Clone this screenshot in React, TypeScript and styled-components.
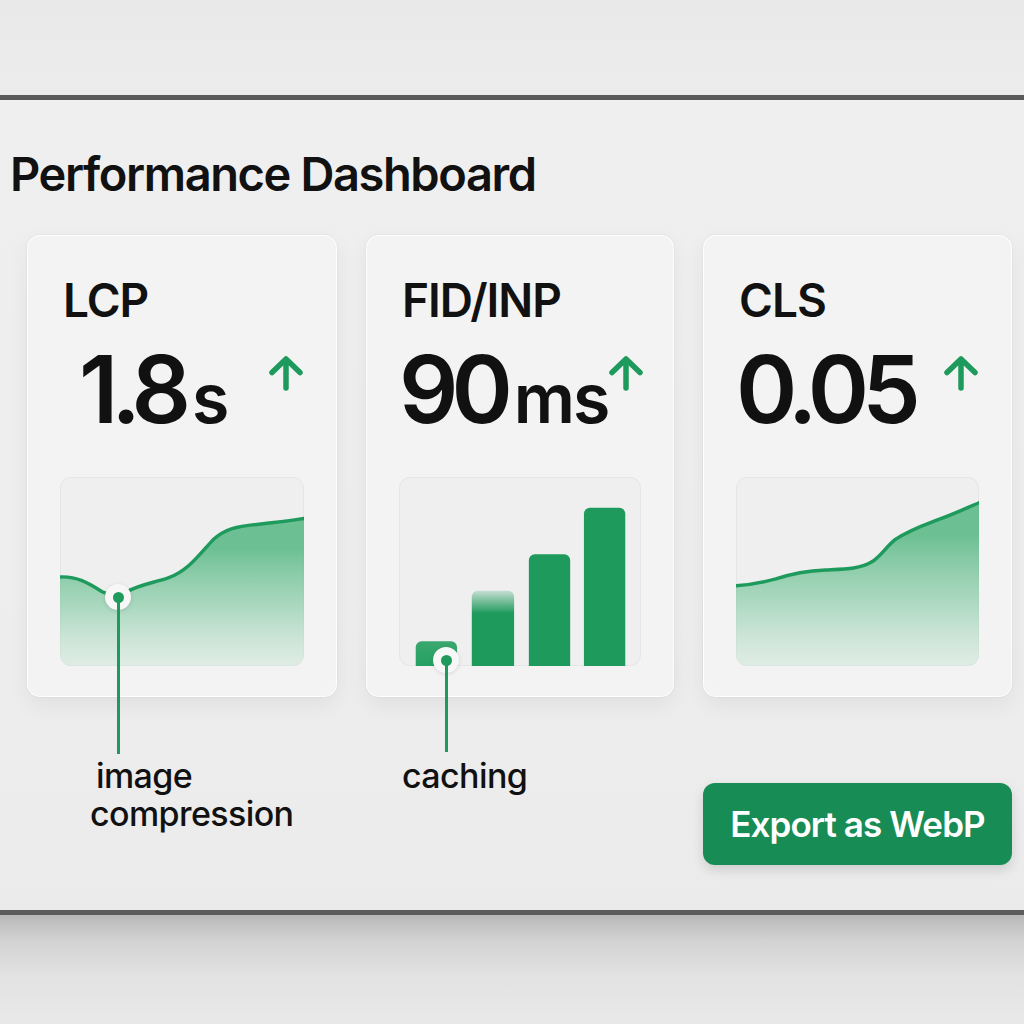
import React from 'react';
import styled, {createGlobalStyle} from 'styled-components';

const GREEN = '#1e9a5c';

const Global = createGlobalStyle`
  html, body {
    margin: 0;
    padding: 0;
    background: #ebebeb;
    font-family: Inter, "Noto Sans", "Liberation Sans", sans-serif;
    color: #111;
  }
`;

const Page = styled.div`
  width: 1024px;
  height: 1024px;
  display: flex;
  flex-direction: column;
  overflow: hidden;
`;

const TopStrip = styled.div`
  height: 95px;
  background: linear-gradient(#e9e9e9, #ececec);
`;

const Panel = styled.section`
  border-top: 5px solid #5a5a5a;
  border-bottom: 5px solid #5c5c5c;
  background: linear-gradient(180deg, #efefef 0%, #eeeeee 60%, #ebebeb 100%);
  padding: 50px 0 45px;
`;

const BottomStrip = styled.div`
  flex: 1;
  background: linear-gradient(#b8b8b8 0px, #d2d2d2 25px, #e2e2e2 60px, #e9e9e9 100%);
`;

const Title = styled.h1`
  margin: 0 0 38px 10px;
  font-size: 47px;
  line-height: 1;
  font-weight: 600;
  letter-spacing: -1.4px;
  color: #111;
`;

const Columns = styled.div`
  display: grid;
  grid-template-columns: 310px 308px 309px;
  column-gap: 29px;
  padding-left: 27px;
`;

const Card = styled.div`
  position: relative;
  height: 462px;
  box-sizing: border-box;
  padding: 41px 32px 30px;
  display: flex;
  flex-direction: column;
  background: #f3f3f3;
  border: 1px solid rgba(255, 255, 255, 0.9);
  border-radius: 13px;
  box-shadow: 0 8px 22px rgba(0, 0, 0, 0.06), 0 0 0 1px rgba(0, 0, 0, 0.025);
`;

const Label = styled.div`
  font-size: 46px;
  line-height: 1;
  font-weight: 600;
  letter-spacing: -1px;
  padding-left: 3px;
`;

const ValueRow = styled.div<{$indent: number}>`
  display: flex;
  justify-content: space-between;
  align-items: flex-start;
  margin-top: 20px;
  padding-left: ${p => p.$indent}px;
  height: 93px;
`;

const Value = styled.div`
  font-size: 93px;
  line-height: 1;
  font-weight: 600;
  letter-spacing: -7px;
  white-space: nowrap;
`;

const Unit = styled.span`
  font-size: 68px;
  letter-spacing: -2px;
  margin-left: 8px;
`;

const ArrowWrap = styled.div`
  margin-top: 12px;
  width: 36px;
  height: 36px;
`;

const ChartBox = styled.div`
  margin-top: 41px;
  height: 191px;
  border-radius: 11px;
  background: #efefef;
  box-shadow: inset 0 0 0 1px rgba(0, 0, 0, 0.035);
  overflow: hidden;
  svg {
    display: block;
    width: 100%;
    height: 100%;
  }
`;

const Marker = styled.div<{$x: number; $y: number; $stem: number}>`
  position: absolute;
  left: ${p => p.$x - 13}px;
  top: ${p => p.$y - 13}px;
  width: 26px;
  height: 26px;
  border-radius: 50%;
  background: #f7f7f7;
  box-shadow: 0 1px 4px rgba(0, 0, 0, 0.12);
  &::before {
    content: '';
    position: absolute;
    left: 12px;
    top: 13px;
    width: 2.5px;
    height: ${p => p.$stem}px;
    background: ${GREEN};
  }
  &::after {
    content: '';
    position: absolute;
    left: 7.5px;
    top: 7.5px;
    width: 11px;
    height: 11px;
    border-radius: 50%;
    background: ${GREEN};
  }
`;

const Notes = styled.div`
  display: grid;
  grid-template-columns: 310px 308px 309px;
  column-gap: 29px;
  padding-left: 27px;
  margin-top: 60px;
`;

const Note = styled.div<{$pad: number}>`
  padding-left: ${p => p.$pad}px;
  font-size: 34px;
  line-height: 38px;
  font-weight: 500;
  letter-spacing: -0.6px;
  color: #111;
`;

const NoteLine = styled.div<{$indent?: number}>`
  padding-left: ${p => p.$indent ?? 0}px;
`;

const ExportButton = styled.button`
  margin-top: 26px;
  height: 82px;
  border: none;
  border-radius: 12px;
  background: #188c55;
  color: #fff;
  font-family: Inter, "Liberation Sans", sans-serif;
  font-size: 35px;
  font-weight: 600;
  letter-spacing: -0.9px;
  box-shadow: 0 5px 12px rgba(0, 0, 0, 0.13);
  cursor: pointer;
`;

const UpArrow = () => (
  <svg width="36" height="36" viewBox="0 0 36 36" fill="none">
    <path d="M18 33V5M4 17.5L18 4L32 17.5" stroke={GREEN} strokeWidth="5.5" strokeLinecap="round" strokeLinejoin="round" />
  </svg>
);

const AreaChart = ({id, line, w}: {id: string; line: string; w: number}) => (
  <svg viewBox={`0 0 ${w} 191`} preserveAspectRatio="none">
    <defs>
      <linearGradient id={id} x1="0" y1="0" x2="0" y2="1">
        <stop offset="0.2" stopColor="#55b783" stopOpacity="0.85" />
        <stop offset="0.6" stopColor="#7ec9a0" stopOpacity="0.6" />
        <stop offset="1" stopColor="#c9e8d6" stopOpacity="0.4" />
      </linearGradient>
    </defs>
    <path d={`${line} L${w},191 L0,191 Z`} fill={`url(#${id})`} />
    <path d={line} fill="none" stroke={GREEN} strokeWidth="3.5" strokeLinecap="round" />
  </svg>
);

const BarChart = () => (
  <svg viewBox="0 0 246 191" preserveAspectRatio="none">
    <defs>
      <linearGradient id="fadeBar" x1="0" y1="0" x2="0" y2="1">
        <stop offset="0" stopColor={GREEN} stopOpacity="0.2" />
        <stop offset="0.3" stopColor={GREEN} stopOpacity="1" />
      </linearGradient>
      <linearGradient id="lowBar" x1="0" y1="0" x2="0" y2="1">
        <stop offset="0" stopColor="#3aa86f" />
        <stop offset="1" stopColor="#24a063" />
      </linearGradient>
    </defs>
    <path d="M17,172 a6,6 0 0 1 6,-6 h30 a6,6 0 0 1 6,6 V191 H17 Z" fill="url(#lowBar)" />
    <path d="M74,121 a6,6 0 0 1 6,-6 h31 a6,6 0 0 1 6,6 V191 H74 Z" fill="url(#fadeBar)" />
    <path d="M132,84 a6,6 0 0 1 6,-6 h30 a6,6 0 0 1 6,6 V191 H132 Z" fill={GREEN} />
    <path d="M188,37 a6,6 0 0 1 6,-6 h30 a6,6 0 0 1 6,6 V191 H188 Z" fill={GREEN} />
  </svg>
);

const lcpLine =
  'M0,101 C18,100 30,108 43,116 C50,120 60,121 68,116 C80,109 95,107 110,102 C130,95 142,78 155,64 C168,52 180,50 200,48 C220,46 235,44 248,42';
const clsLine =
  'M0,110 C15,109 25,107 40,103 C55,98 68,95 90,94 C110,93 124,93 136,86 C146,80 150,71 160,63 C175,53 190,48 203,43 C220,37 232,31 244,26';

const App: React.FunctionComponent = () => {
  return (
    <Page>
      <Global />
      <TopStrip />
      <Panel>
        <Title>Performance Dashboard</Title>
        <Columns>
          <Card>
            <Label>LCP</Label>
            <ValueRow $indent={19}>
              <Value>1.8<Unit>s</Unit></Value>
              <ArrowWrap><UpArrow /></ArrowWrap>
            </ValueRow>
            <ChartBox>
              <AreaChart id="lcpFill" line={lcpLine} w={248} />
            </ChartBox>
            <Marker $x={90} $y={361} $stem={157} />
          </Card>
          <Card>
            <Label>FID/INP</Label>
            <ValueRow $indent={0}>
              <Value>90<Unit>ms</Unit></Value>
              <ArrowWrap><UpArrow /></ArrowWrap>
            </ValueRow>
            <ChartBox>
              <BarChart />
            </ChartBox>
            <Marker $x={79} $y={424} $stem={92} />
          </Card>
          <Card>
            <Label>CLS</Label>
            <ValueRow $indent={0}>
              <Value>0.05</Value>
              <ArrowWrap><UpArrow /></ArrowWrap>
            </ValueRow>
            <ChartBox>
              <AreaChart id="clsFill" line={clsLine} w={244} />
            </ChartBox>
          </Card>
        </Columns>
        <Notes>
          <Note $pad={63}>
            <NoteLine $indent={6}>image</NoteLine>
            <NoteLine>compression</NoteLine>
          </Note>
          <Note $pad={36}>caching</Note>
          <ExportButton>Export as WebP</ExportButton>
        </Notes>
      </Panel>
      <BottomStrip />
    </Page>
  );
};

export default App;
